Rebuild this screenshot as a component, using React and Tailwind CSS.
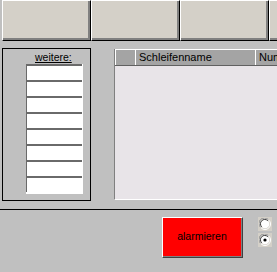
import React from 'react';

const font = { fontFamily: '"Liberation Sans", Arial, sans-serif' };

const TopButton = () => (
  <div className="shrink-0 w-[89px] h-[41px] border-t border-l border-t-white border-l-white border-r border-b border-r-black border-b-black">
    <div className="w-full h-full bg-[#d4d0c8] border-r-2 border-b-2 border-r-[#808080] border-b-[#808080]" />
  </div>
);

const Radio = ({ checked }) => (
  <div className="w-[14px] h-[14px] bg-[#d4d0c8] flex items-center justify-center">
    <svg width="12" height="12" viewBox="0 0 12 12">
      <circle cx="6" cy="6" r="5.5" fill="none" stroke="#ffffff" />
      <path d="M1.6 9.4 A5.5 5.5 0 0 1 9.4 1.6" fill="none" stroke="#808080" />
      <circle cx="6" cy="6" r="4.3" fill="#ffffff" />
      <path d="M2.7 8.8 A4.3 4.3 0 0 1 8.8 2.7" fill="none" stroke="#404040" />
      {checked && <circle cx="6" cy="6" r="1.6" fill="#000000" />}
    </svg>
  </div>
);

export default function App() {
  return (
    <div className="w-[277px] h-[272px] bg-[#c0c0c0] overflow-hidden flex flex-col" style={font}>
      <div className="flex pl-[2px] shrink-0">
        <TopButton />
        <TopButton />
        <TopButton />
        <TopButton />
      </div>

      <div className="flex mt-[7px] shrink-0">
        <div className="shrink-0 ml-[2px] w-[89px] h-[153px] border border-black flex flex-col">
          <div className="pt-[2px] pl-[32px] leading-[12px] text-[10.5px] text-black underline">weitere:</div>
          <div className="mt-[1px] ml-[23px] w-[57px] border-r border-b-2 border-r-white border-b-white flex flex-col">
            {Array.from({ length: 8 }).map((_, i) => (
              <div key={i} className="h-[16px] bg-white border-t-2 border-l border-t-[#6a6a6a] border-l-[#6a6a6a]" />
            ))}
          </div>
        </div>

        <div className="ml-[23px] mt-[1px] flex-1 h-[151px] flex flex-col bg-[#e8e4e8] border-l border-l-[#808080] border-b border-b-white">
          <div className="flex h-[17px] bg-[#a4a4a4] border-b border-b-[#606060] text-[11px] leading-[15px] text-black">
            <div className="shrink-0 w-[20px] border-t border-l border-white" />
            <div className="shrink-0 w-[120px] border-t border-l border-white pl-[3px] whitespace-nowrap">Schleifenname</div>
            <div className="flex-1 border-t border-l border-white pl-[3px] whitespace-nowrap overflow-hidden">Num</div>
          </div>
        </div>
      </div>

      <div className="mt-[8px] border-t border-black shrink-0" />

      <div className="flex mt-[7px] shrink-0">
        <div className="shrink-0 ml-[162px] w-[81px] h-[41px] border-t border-l border-white border-r border-b border-r-[#404040] border-b-[#404040]">
          <div className="w-full h-full bg-[#ff0000] border-r border-b border-r-[#808080] border-b-[#808080] flex items-center justify-center text-[10.5px] text-black">
            alarmieren
          </div>
        </div>
        <div className="shrink-0 ml-[15px] flex flex-col gap-[2px]">
          <Radio />
          <Radio checked />
        </div>
      </div>
    </div>
  );
}
